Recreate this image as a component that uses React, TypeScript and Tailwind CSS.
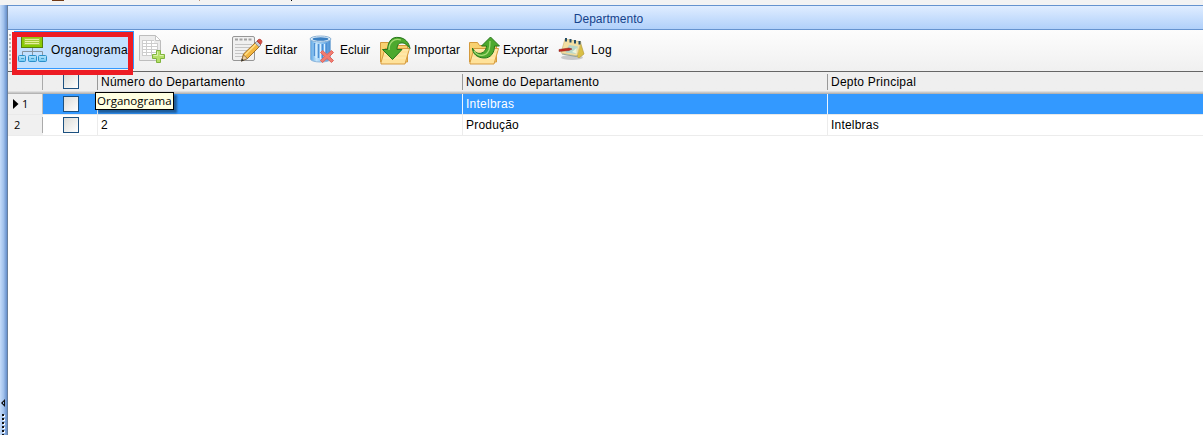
import type { ReactNode } from "react";

const OrgIcon = () => (
  <svg className="h-8 w-8 shrink-0" viewBox="0 0 32 32">
    <defs>
      <linearGradient id="og" x2="0" y2="1"><stop stopColor="#93c714" /><stop offset="1" stopColor="#86cc00" /></linearGradient>
      <linearGradient id="ob" x2="0" y2="1"><stop stopColor="#b4e4fb" /><stop offset="1" stopColor="#6cc6f3" /></linearGradient>
    </defs>
    <path d="M15.500 14v7M5.500 21v-3.500h20V21" fill="none" stroke="#8794a0" />
    <rect x="4.500" y="1.500" width="21" height="12" fill="url(#og)" stroke="#55800c" />
    <rect x="7" y="4" width="16" height="7" fill="#a5c93a" />
    <path d="M8 5.500h14M8 7.500h14M8 9.500h14" stroke="#e6f09c" />
    <g fill="url(#ob)" stroke="#2a8fc9">
      <rect x="1.500" y="21.500" width="7" height="6" rx="1" />
      <rect x="11.500" y="21.500" width="8" height="6" rx="1" />
      <rect x="21.500" y="21.500" width="8" height="6" rx="1" />
    </g>
    <path d="M4 24.500h3M14 24.500h3M24 24.500h3" stroke="#4a9cc8" />
  </svg>
);

const AddIcon = () => (
  <svg className="h-8 w-8 shrink-0" viewBox="0 0 32 32">
    <path d="M1.500 1.500h16l5 5v20h-21z" fill="#ececec" stroke="#bdbdbd" />
    <path d="M17.500 1.500v5h5z" fill="#fff" stroke="#c4c4c4" />
    <path d="M4 6h12v3h4v13H4z" fill="#fff" />
    <path d="M4 6.500h12M4 9.500h16M4 12.500h16M4 15.500h16M4 18.500h16M4 21.500h12M4.500 6v16M8.500 6v16M13.500 6v16M19.500 9v9" stroke="#cdcdcd" fill="none" />
    <path d="M18.500 16.500h4v4h4v4h-4v4h-4v-4h-4v-4h4z" fill="#b5df68" stroke="#80b43e" />
    <path d="M19.500 17.500v4h-4M21.500 21.500h4" stroke="#dcf3ad" fill="none" />
  </svg>
);

const EditIcon = () => (
  <svg className="h-8 w-8 shrink-0" viewBox="0 0 32 32">
    <rect x="1.500" y="2.500" width="22" height="24" rx="1.500" fill="#f0f0f0" stroke="#969696" />
    <path d="M4 5.500h18" stroke="#a2a2a2" strokeWidth="2" strokeDasharray="3 1.500" />
    <path d="M4 10.500h17M4 13.500h15M4 16.500h12M4 19.500h10M4 22.500h8" stroke="#c5c5c5" />
    <path d="M10.500 27l2-7L25 8l4 4-12.500 12.500z" fill="#f2b640" stroke="#9a651a" strokeWidth=".9" />
    <path d="M14 21L26 9" stroke="#ffe08a" strokeWidth="1.500" />
    <path d="M10.500 27l2-6 4 3.500z" fill="#edcfa2" stroke="#80643e" strokeWidth=".7" />
    <path d="M10 27.500l1-3 2 2z" fill="#333" />
    <path d="M24 9l2-2 4 4-2 2z" fill="#c5cbd4" stroke="#7b7f89" strokeWidth=".7" />
    <path d="M26 7l1.500-1.500c2-1 4.500 1.500 3 3.500L29.500 10.500z" fill="#d94e40" stroke="#a93229" strokeWidth=".7" />
  </svg>
);

const DeleteIcon = () => (
  <svg className="h-8 w-8 shrink-0" viewBox="0 0 32 32">
    <defs><linearGradient id="bin"><stop stopColor="#5ba5e4" /><stop offset=".3" stopColor="#c2e4fb" /><stop offset=".65" stopColor="#85bff0" /><stop offset="1" stopColor="#4b8ed0" /></linearGradient></defs>
    <path d="M2.500 5v20c0 4 20 4 20 0V5z" fill="url(#bin)" stroke="#8db6dc" />
    <path d="M6.500 9v13M10.500 10v14M14.500 10v14M18.500 9v10" stroke="#4c90d5" strokeWidth="1.500" />
    <path d="M8 10v14M12.500 10v15M16.500 10v12" stroke="#dcf0ff" />
    <ellipse cx="12.500" cy="5" rx="10.500" ry="3" fill="#e2f1fc" stroke="#8db3d6" />
    <ellipse cx="12.500" cy="5" rx="8" ry="1.700" fill="#3a7fc2" />
    <path d="M12.500 18.500l2-2 4.500 4 4.500-4 2 2-4 4 4 4-2 2-4.500-4-4.500 4-2-2 4-4z" fill="#f17c70" stroke="#df665e" />
  </svg>
);

const Folder = () => (
  <>
    <path d="M1.500 28V8.500h8l2 3h17V28z" fill="#f8d170" stroke="#d49a3c" />
    <path d="M2 28.500l4-14h24.500l-4.500 15.500H2z" fill="#ffe29a" stroke="#d79b3e" />
    <path d="M6.500 16h23M5 20h23M4 24h23" stroke="#ffedb5" />
  </>
);

const ImportIcon = () => (
  <svg className="h-8 w-8 shrink-0" viewBox="0 0 32 32">
    <Folder />
    <path d="M3.500 15.500h5C9 7 13 2.500 20 3.500c6 .500 10 5 11 11-3-4-6-6-9-5.500-3 0-4 3-4 6.500h5L13.500 25.500z" fill="#4da92e" stroke="#26761b" />
    <path d="M10 16c0-8 5-12 12-10" fill="none" stroke="#a7db77" strokeWidth="1.300" />
  </svg>
);

const ExportIcon = () => (
  <svg className="h-8 w-8 shrink-0" viewBox="0 0 32 32">
    <Folder />
    <path d="M4.500 14c2 5 7 7 11 4 2-1.500 3-4 3-6h-5L22.500 3l9 9h-5c0 7-4 12-10 12-7 0-12-4-12-10z" fill="#4da92e" stroke="#26761b" />
    <path d="M6 17c4 6 12 6 15-1 1-3 1-5 1-9" fill="none" stroke="#a7db77" strokeWidth="1.300" />
  </svg>
);

const LogIcon = () => (
  <svg className="h-8 w-8 shrink-0" viewBox="0 0 32 32">
    <ellipse cx="15" cy="23.500" rx="11" ry="2.500" fill="#c7c8ca" />
    <path d="M23 7l4 13-5 4-4-3z" fill="#d9bf45" stroke="#b89e3e" strokeWidth=".7" />
    <path d="M8 5l16 3-4 14-16-3z" fill="#f3dfa2" stroke="#d3bb7b" strokeWidth=".7" />
    <path d="M12 11l9 1.500-2.500 7.500-10-1.500z" fill="#b8d7c9" />
    <path d="M5 20l14 2.500 2-1" fill="none" stroke="#93a59c" />
    <path d="M15 18l4.500-4v5.500z" fill="#edf4df" />
    <path d="M9 4v3.500M13.500 5v3.500M18 6v3.500M22.500 7v3.500" stroke="#254d68" strokeWidth="2" />
    <path d="M2 15.500l10-1.500 3 1-3 1.500-10 1z" fill="#c72920" stroke="#82251b" strokeWidth=".5" />
  </svg>
);

type ToolProps = { icon: ReactNode; label: string; className: string; text: string };
const Tool = ({ icon, label, className, text }: ToolProps) => (
  <button className={`mt-px flex h-[38px] shrink-0 items-center whitespace-nowrap ${className}`}>
    {icon}
    <span className={text}>{label}</span>
  </button>
);

const Check = () => (
  <span className="block size-4 border border-[#1c5180] bg-linear-to-br from-[#dcdcd7] to-white" />
);

const cols = "grid grid-cols-[35px_54px_365px_365px_1fr]";

const Heading = ({ label, className }: { label: string; className: string }) => (
  <div className="flex">
    <i className="mt-[2px] h-4 w-px bg-[#999]" />
    <span className={`pt-px pl-[3px] ${className}`}>{label}</span>
  </div>
);

export default function App() {
  return (
    <div className="relative flex h-[435px] w-[1203px] overflow-hidden bg-white font-['Liberation_Sans',Arial,sans-serif] text-xs text-black">
      <aside className="flex w-2 shrink-0 flex-col bg-[#f3f3f3] pt-[5px]">
        <div className="flex flex-1 flex-col border-r border-[#687f9d] bg-linear-to-r from-[#c5dcfa] via-[#a2c2ec] to-[#658fcc] pt-[394px]">
          <svg className="h-9 w-[7px]" viewBox="0 0 7 36">
            <path d="M5 0v8L1 4z" fill="#111" /><path d="M3 3h1v2H3z" fill="#8db5ec" />
            <path d="M4 16v20" stroke="#fff" strokeWidth="2" strokeDasharray="2 2" />
            <path d="M3 15v21" stroke="#111" strokeWidth="2" strokeDasharray="2 2" />
          </svg>
        </div>
      </aside>
      <main className="flex min-w-0 flex-1 flex-col">
        <div className="flex h-[5px] shrink-0 items-start bg-[#f3f3f3]">
          <span className="ml-[44px] h-px w-3 bg-[#713a16]" />
          <span className="ml-[135px] h-px w-px bg-[#be957a]" />
          <span className="ml-[91px] h-px w-px bg-black" />
        </div>
        <header className="flex h-[25px] shrink-0 items-center justify-center border-y border-[#6593cf] bg-linear-to-b from-[#e0edff] to-[#b0d0fa] pt-[3px] pl-[6px] text-[#15428b]">
          <h1>Departmento</h1>
        </header>
        <nav className="flex h-[41px] shrink-0 items-start bg-linear-to-b from-[#fdfdfd] to-[#f0f0f0]">
          <span className="mt-1 mr-1 ml-px h-8 w-[2px] shrink-0 bg-[repeating-linear-gradient(#bbb_0_2px,transparent_2px_4px)]" />
          <Tool icon={<OrgIcon />} label="Organograma" className="mr-[4px] -ml-px w-[120px] border border-[#3399ff] bg-[#c2e0ff] pl-[2px]" text="ml-[2px] tracking-[0.27px]" />
          <Tool icon={<AddIcon />} label="Adicionar" className="w-[93px]" text="ml-px tracking-[0.2px]" />
          <Tool icon={<EditIcon />} label="Editar" className="w-[77px]" text="ml-[2px] tracking-[0.2px]" />
          <Tool icon={<DeleteIcon />} label="Ecluir" className="w-[71px]" text="" />
          <Tool icon={<ImportIcon />} label="Importar" className="w-[89px]" text="ml-[3px] tracking-[0.2px]" />
          <Tool icon={<ExportIcon />} label="Exportar" className="w-[89px]" text="ml-[3px]" />
          <Tool icon={<LogIcon />} label="Log" className="w-[60px]" text="ml-[2px] tracking-[0.3px]" />
        </nav>
        <section className="shrink-0">
          <div className={`${cols} h-[23px] border-t border-[#666] bg-linear-to-b from-[#efefef] from-85% to-[#aaa] leading-[19px]`}>
            <div className="mt-[2px] h-4 border-r border-[#aaa]" />
            <div className="flex justify-center pt-px pl-[2px]"><Check /></div>
            <Heading label="Número do Departamento" className="tracking-[0.25px]" />
            <Heading label="Nome do Departamento" className="tracking-[0.25px]" />
            <Heading label="Depto Principal" className="tracking-[0.25px]" />
          </div>
          <div className={`${cols} h-[21px] border-b border-[#e9e9e9] bg-[#3399ff] leading-5 text-white`}>
            <div className="flex items-center border-r border-[#bbb] bg-[#f0f0f0] pl-[5px] text-black">
              <svg className="h-[10px] w-[6px]" viewBox="0 0 6 10"><path d="M0 0l5.500 5L0 10z" fill="#000" /></svg>
              <span className="ml-[3px] font-['Open_Sans',sans-serif] text-[11px]">1</span>
            </div>
            <div className="flex items-center justify-center pl-[2px]"><Check /></div>
            <div className="border-l border-white/90" />
            <div className="border-l border-white/90 pl-[3px] tracking-[0.25px]">Intelbras</div>
            <div className="border-l border-white/90" />
          </div>
          <div className={`${cols} h-[21px] border-b border-[#ececec] bg-white leading-5`}>
            <div className="flex bg-[#f0f0f0] pl-[6px] font-['Open_Sans',sans-serif] text-[11px] leading-5">
              <span className="flex-1">2</span>
              <i className="mt-[2px] h-4 w-px bg-[#aaa]" />
            </div>
            <div className="flex items-center justify-center pl-[2px]"><Check /></div>
            <div className="border-l border-[#ececec] pl-[3px]">2</div>
            <div className="border-l border-[#ececec] pl-[3px] tracking-[0.2px]">Produção</div>
            <div className="border-l border-[#ececec] pl-[3px] tracking-[0.2px]">Intelbras</div>
          </div>
        </section>
      </main>
      <div className="absolute top-8 left-3 h-[43px] w-[121px] border-[5px] border-[#ed1c24]" />
      <div role="tooltip" className="absolute top-[92px] left-[95px] h-[18px] w-[79px] border border-black bg-[#ffffe1] pl-px font-['Open_Sans',sans-serif] text-[11.500px] leading-4 shadow-[3px_3px_2px_rgba(0,0,0,0.4)]">Organograma</div>
    </div>
  );
}
